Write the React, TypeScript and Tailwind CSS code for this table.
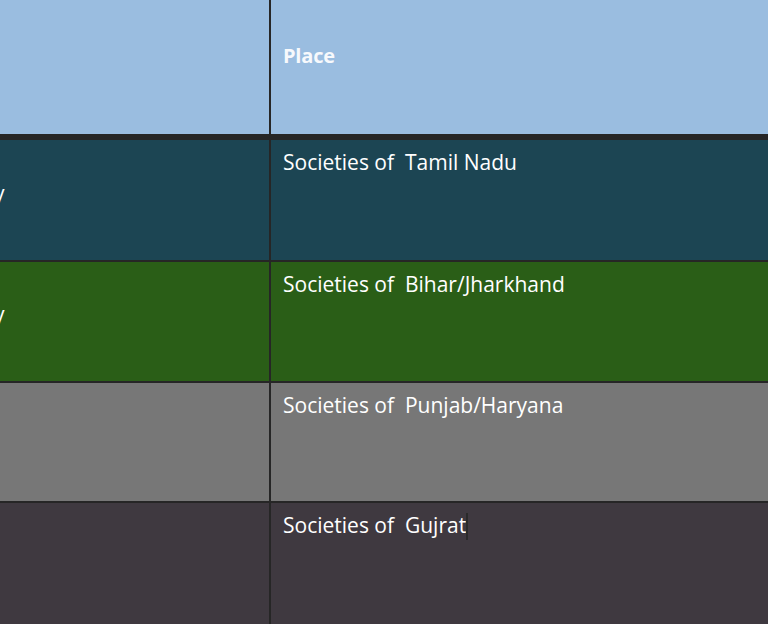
import React from "react";

const font = { fontFamily: '"Open Sans", "Noto Sans", sans-serif' };

export default function App() {
  return (
    <div className="w-[768px] h-[624px] overflow-hidden bg-[#3f3940] text-white" style={font}>
      <div className="flex h-[140px] bg-[#9abde0] border-b-[6px] border-[#262626]">
        <div className="w-[271px] shrink-0 border-r-2 border-[#262626]" />
        <div className="flex-1 pl-[12px] pt-[41px] text-[20px] font-bold tracking-[-0.2px] text-[#f7f9fc]">Place</div>
      </div>
      <Row bg="bg-[#1c4553]" h="h-[122px]" label="Societies of  Tamil Nadu" tail />
      <Row bg="bg-[#2a5e17]" h="h-[121px]" label="Societies of  Bihar/Jharkhand" tail />
      <Row bg="bg-[#777777]" h="h-[120px]" label="Societies of  Punjab/Haryana" />
      <div className="flex h-[121px] bg-[#3f3940]">
        <div className="w-[271px] shrink-0 border-r-2 border-[#262626]" />
        <div className="flex-1 pl-[12px] pt-[7px] text-[21px] whitespace-pre">
          Societies of  Gujrat
          <span className="inline-block w-[2px] h-[27px] bg-[#2a2a2a] align-[-7px]" />
        </div>
      </div>
    </div>
  );
}

function Row({ bg, h, label, tail }: { bg: string; h: string; label: string; tail?: boolean }) {
  return (
    <div className={`flex ${h} ${bg} border-b-2 border-[#262626]`}>
      <div className="w-[271px] shrink-0 border-r-2 border-[#262626] flex items-center overflow-hidden">
        {tail && <span className="-ml-[6px] text-[21px] leading-none mt-[-14px]">y</span>}
      </div>
      <div className="flex-1 pl-[12px] pt-[7px] text-[21px] whitespace-pre">{label}</div>
    </div>
  );
}
